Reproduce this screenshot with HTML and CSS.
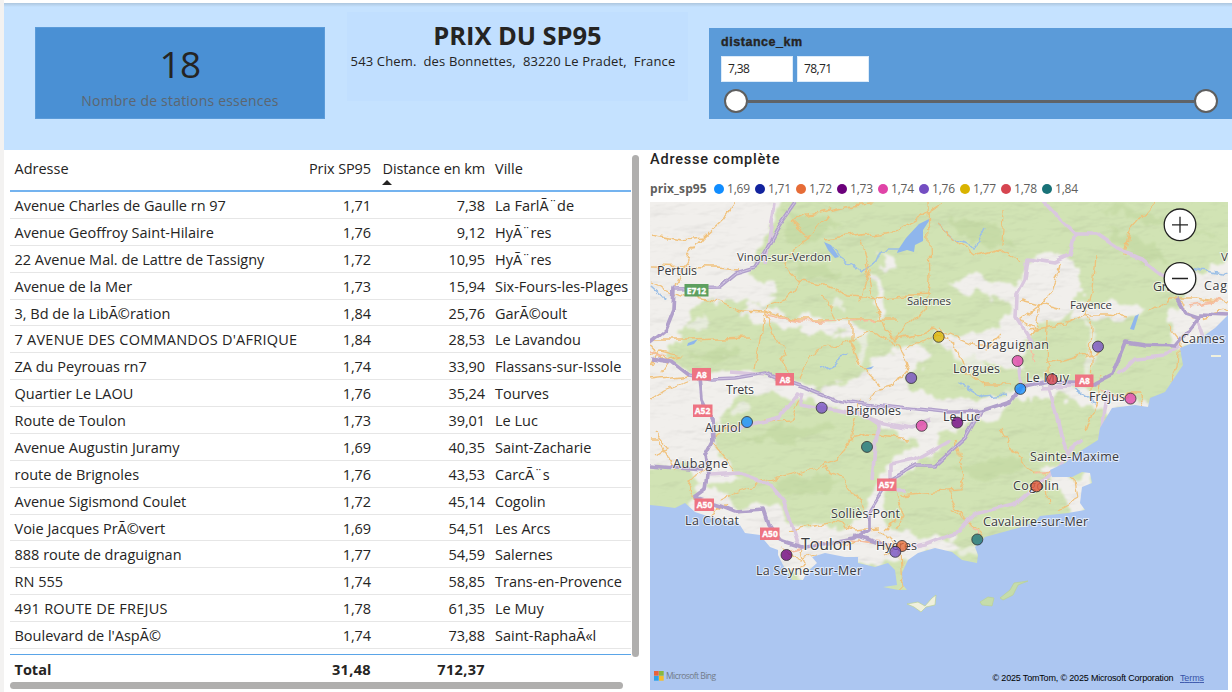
FILE: index.html
```html
<!DOCTYPE html>
<html lang="fr">
<head>
<meta charset="utf-8">
<title>Prix du SP95</title>
<link rel="stylesheet" href="styles.css">
</head>
<body>
<div class="report">
  <header class="banner">
    <section class="card">
      <div class="card-value">18</div>
      <div class="card-label">Nombre de stations essences</div>
    </section>
    <section class="title-box">
      <h1>PRIX DU SP95</h1>
      <p>543 Chem.&nbsp; des Bonnettes,&nbsp; 83220 Le Pradet,&nbsp; France</p>
    </section>
    <section class="slicer">
      <div class="slicer-name">distance_km</div>
      <div class="slicer-inputs"><span>7,38</span><span>78,71</span></div>
      <div class="slider"><i class="knob"></i><i class="track"></i><i class="knob"></i></div>
    </section>
  </header>
  <main class="content">
    <section class="table-visual">
      <div class="table-area">
        <div class="grid">
          <div class="row head"><span>Adresse</span><span class="num">Prix SP95</span><span class="num sorted">Distance en km</span><span>Ville</span></div>
          <div class="rows">
          <div class="row"><span>Avenue Charles de Gaulle rn 97</span><span class="num">1,71</span><span class="num">7,38</span><span>La FarlÃ¨de</span></div>
          <div class="row"><span>Avenue Geoffroy Saint-Hilaire</span><span class="num">1,76</span><span class="num">9,12</span><span>HyÃ¨res</span></div>
          <div class="row"><span>22 Avenue Mal. de Lattre de Tassigny</span><span class="num">1,72</span><span class="num">10,95</span><span>HyÃ¨res</span></div>
          <div class="row"><span>Avenue de la Mer</span><span class="num">1,73</span><span class="num">15,94</span><span>Six-Fours-les-Plages</span></div>
          <div class="row"><span>3, Bd de la LibÃ©ration</span><span class="num">1,84</span><span class="num">25,76</span><span>GarÃ©oult</span></div>
          <div class="row"><span class="caps">7 AVENUE DES COMMANDOS D'AFRIQUE</span><span class="num">1,84</span><span class="num">28,53</span><span>Le Lavandou</span></div>
          <div class="row"><span>ZA du Peyrouas rn7</span><span class="num">1,74</span><span class="num">33,90</span><span>Flassans-sur-Issole</span></div>
          <div class="row"><span>Quartier Le LAOU</span><span class="num">1,76</span><span class="num">35,24</span><span>Tourves</span></div>
          <div class="row"><span>Route de Toulon</span><span class="num">1,73</span><span class="num">39,01</span><span>Le Luc</span></div>
          <div class="row"><span>Avenue Augustin Juramy</span><span class="num">1,69</span><span class="num">40,35</span><span>Saint-Zacharie</span></div>
          <div class="row"><span>route de Brignoles</span><span class="num">1,76</span><span class="num">43,53</span><span>CarcÃ¨s</span></div>
          <div class="row"><span>Avenue Sigismond Coulet</span><span class="num">1,72</span><span class="num">45,14</span><span>Cogolin</span></div>
          <div class="row"><span>Voie Jacques PrÃ©vert</span><span class="num">1,69</span><span class="num">54,51</span><span>Les Arcs</span></div>
          <div class="row"><span>888 route de draguignan</span><span class="num">1,77</span><span class="num">54,59</span><span>Salernes</span></div>
          <div class="row"><span>RN 555</span><span class="num">1,74</span><span class="num">58,85</span><span>Trans-en-Provence</span></div>
          <div class="row"><span class="caps">491 ROUTE DE FREJUS</span><span class="num">1,78</span><span class="num">61,35</span><span>Le Muy</span></div>
          <div class="row"><span>Boulevard de l'AspÃ©</span><span class="num">1,74</span><span class="num">73,88</span><span>Saint-RaphaÃ«l</span></div>
          </div>
          <div class="row total"><span>Total</span><span class="num">31,48</span><span class="num">712,37</span><span></span></div>
        </div>
        <div class="vbar"></div>
      </div>
      <div class="hbar"></div>
    </section>
    <section class="map-visual">
      <h2>Adresse complète</h2>
      <div class="legend">
        <b>prix_sp95</b>
        <span class="key c169">1,69</span><span class="key c171">1,71</span><span class="key c172">1,72</span><span class="key c173">1,73</span><span class="key c174">1,74</span><span class="key c176">1,76</span><span class="key c177">1,77</span><span class="key c178">1,78</span><span class="key c184">1,84</span>
      </div>
      <svg class="map" viewBox="650 202 578 488" width="578" height="488">
        <defs>
          <clipPath id="land"><path d="M650 202H1228V315L1215 328 1195 342 1180 348 1183 365 1175 377 1165 392 1150 398 1148 407 1135 405 1112 408 1100 428 1098 440 1082 450 1065 463 1050 470 1052 477 1072 477 1082 472 1090 473 1092 483 1082 487 1080 503 1085 510 1068 513 1040 516 1035 522 1018 528 985 537 975 547 978 555 977 563 962 560 952 552 935 548 918 553 908 560 902 573 903 585 907 590 898 590 883 587 897 585 895 570 888 563 875 567 858 563 858 557 845 557 825 553 812 557 817 563 807 572 803 580 792 580 783 565 778 555 778 550 770 547 760 535 745 533 738 522 710 517 695 512 685 503 675 508 660 506 650 505Z"/></clipPath>
          <filter id="soft" x="-10%" y="-10%" width="120%" height="120%"><feTurbulence type="fractalNoise" baseFrequency=".06" numOctaves="3" seed="4" result="n"/><feDisplacementMap in="SourceGraphic" in2="n" scale="22" xChannelSelector="R" yChannelSelector="G"/><feGaussianBlur stdDeviation="1"/></filter>
          <filter id="wob" x="-5%" y="-5%" width="110%" height="110%"><feTurbulence type="fractalNoise" baseFrequency=".07" numOctaves="3" seed="8" result="n"/><feDisplacementMap in="SourceGraphic" in2="n" scale="11" xChannelSelector="R" yChannelSelector="G"/></filter>
          <filter id="sway" x="-5%" y="-5%" width="110%" height="110%"><feTurbulence type="fractalNoise" baseFrequency=".04" numOctaves="2" seed="3" result="n"/><feDisplacementMap in="SourceGraphic" in2="n" scale="8" xChannelSelector="R" yChannelSelector="G"/></filter>
          <filter id="relief" x="0" y="0" width="100%" height="100%"><feTurbulence type="fractalNoise" baseFrequency=".022 .05" numOctaves="4" seed="11"/><feDiffuseLighting surfaceScale="4" lighting-color="#fff" diffuseConstant="1.15"><feDistantLight azimuth="235" elevation="58"/></feDiffuseLighting></filter>
        </defs>
        <rect x="650" y="202" width="578" height="488" fill="#acc6f1"/>
        <g clip-path="url(#land)">
          <rect x="650" y="202" width="578" height="400" fill="#d1e3b4"/>
          <g filter="url(#soft)" fill="#f1efec">
            <path d="M630 190H785L770 235 752 268 770 290 735 300 705 302 690 320 672 345 665 360 630 365Z"/>
            <path d="M630 352L665 360 690 372 745 372 790 378 820 388 808 400 770 392 735 398 715 425 718 455 740 480 700 485 690 465 630 468Z"/>
            <path d="M690 485L715 488 740 508 775 505 790 520 830 528 862 520 872 490 892 462 915 445 920 462 888 490 882 525 915 535 965 540 960 550 900 560 850 565 800 580 740 540 690 525Z"/>
            <path d="M945 285L975 275 1020 285 1022 262 1062 252 1080 270 1080 300 1060 320 1020 340 1022 372 990 362 960 358 930 335 965 335 1000 328 1010 302 965 292Z"/>
            <path d="M1075 305L1130 300 1150 308 1120 322 1070 322Z"/>
            <path d="M1180 300L1200 270 1240 255V330L1195 342 1180 348 1165 322Z"/>
            <path d="M870 375L880 352 925 345 930 358 910 370 908 392 945 398 1000 398 1040 378 1070 380 1100 392 1130 395 1150 400 1145 412 1110 412 1060 398 1010 398 1000 420 940 432 905 438 870 420 845 410 805 402 830 385Z"/>
            <path d="M750 285q25-8 30 5l-15 15-18-5zM745 300l40 14 60 8 30 12-30 2-60-8-45-14zM870 270l10 3 6 48-7 5zM880 258l12-2 6 15-10 4zM918 430l20-4-5 32-20 3zM1040 470l22-6 10 15 18-8 4 12-10 26-14 4-6-20-18-12z"/>
            <path d="M858 330l12 2-8 32-7-6zM945 338l24 10 16 20-14 4-20-18zM1082 312l18 38-8 34-8-3 3-34zM690 320l12-4 6 10-12 8zM730 410l15-6 5 6-15 8zM835 300l12 4-5 8-10-3zM960 545l14 2 2 14-10-4z" opacity=".7"/>
          </g>
          <rect x="650" y="202" width="578" height="390" filter="url(#relief)" style="mix-blend-mode:multiply" opacity=".22"/>
          <g filter="url(#soft)" fill="#b6cf91" opacity=".35">
            <path d="M785 210l55 12-30 24-22-5zM690 355l35-10 15 8-25 12zM800 262l40 8-10 12-35-6zM740 440l70-20 25 8-40 14zM950 215l50 14 15 20-45-8zM1100 225l40 12 30 28-30-6zM950 470l60-14 20 12-50 12zM770 480l60-8 15 12-55 10zM1090 205l60 8 70 25-60-8z"/>
          </g>
          <g fill="#8fb6ec">
            <path d="M898 250l8-12 13-14 12-6-8 12 0 11-8 4-1 7-7-2-10 3z"/>
            <path d="M824 242l7 3 8 12-4 1-7-8zM688 343l10-4-4 5-7 2zM864 369l10-3-3 3zM1130 329l5-13 4-2-5 16z"/>
          </g>
          <g fill="none" stroke="#9dc0e6" stroke-width="1.6" filter="url(#wob)">
            <path d="M830 248L842 258 852 265 862 272 875 262 880 250 900 250M820 370L832 366 840 356 848 352M650 286L665 300M935 222L955 240 975 248 985 228M960 382L985 397 1005 395M1075 388L1095 402M1190 268L1228 275"/>
          </g>
          <g fill="none" stroke="#f1c078" stroke-width="1.3" opacity=".95" filter="url(#wob)">
            <path d="M650 234L680 240 703 238 723 219 735 202M703 238L688 256 674 286M650 266L715 267 740 269M650 282L680 294 712 300 743 311 763 312 795 320 840 320 895 320"/>
            <path d="M790 220L810 239 780 260 800 282 785 300 770 305 763 312 760 340 755 370M763 312L782 350 790 378M800 282L825 285 850 296 875 298 930 295M825 297L838 322M928 202L930 280 925 310 895 340 885 330 875 300 865 262M790 220L850 205 880 202M825 240L900 230 945 202M808 239L828 215"/>
            <path d="M650 340L690 340 750 338M650 345L662 360 680 355 660 350 650 356M650 380L690 376M650 400L665 390 690 380M675 470L660 440 650 440M852 322L852 340 815 350 800 378M850 340L870 332 900 345 908 370 895 385 875 390 870 400M850 340L860 365 880 385"/>
            <path d="M935 222L960 245 975 255 1000 248 1020 262M1005 210L1003 245M1060 265L1050 295 1040 305 1035 330 1030 340M1020 300L1060 310M1095 255L1092 290 1085 315 1092 330 1090 390M1125 255L1130 230 1155 202M935 330L955 345 965 370 985 385 1010 385M940 330L975 345 1000 345M1028 330L1065 325 1085 315 1110 315 1128 318M1045 365L1100 352M1048 320L1047 375M1100 375L1097 400 1085 430M1150 310L1170 298 1195 298 1228 302"/>
            <path d="M695 500L685 480 705 470M720 500L740 490 760 483 810 470 835 460 850 440 860 400M725 505L700 525 715 525M735 470L710 440 730 425 790 420 800 400M822 468L845 478 860 500 865 510M850 440L870 435 910 440M790 530L830 522 855 530 880 528M880 530L900 550 902 590M895 490L905 515 895 530M900 495L960 490 965 475 955 440M950 490L957 510 970 520M800 550L805 565 790 570M1000 430L1015 455 1035 473M1035 473L1060 475 1075 480 1078 500 1060 510M1045 475L1048 505M1120 395L1140 395 1145 405M1168 325L1180 340 1178 365 1170 380M1180 300L1190 320 1228 310"/>
            <path d="M650 366L658 352 668 362 660 372M655 430L668 446 655 455M905 350L925 340 940 335M860 300L870 270 862 240M895 340L935 330M1040 305L1020 320 1038 330M985 350L1000 335M985 537L968 520 952 510M840 545L860 540 895 548 885 555M885 530L895 520M780 550L800 560 815 555"/>
          </g>
          <g fill="none" stroke="#f6bda0" stroke-width="1.4" filter="url(#wob)">
            <path d="M765 315L800 322 840 320M853 322L875 320M1028 335L1035 360M650 352L665 355M1190 305L1220 300M1035 474L1050 472M1100 390L1130 398M790 550L815 545 850 540 895 545M980 535L970 525"/>
          </g>
          <g fill="none" stroke="#dac8df" stroke-width="3.6" stroke-linejoin="round" filter="url(#sway)">
            <path d="M1043 202L1058 218 1075 235 1098 235 1120 250 1140 258 1165 278M1075 235L1070 255 1055 262 1028 258 1025 280 1017 295 1016 318 1030 340 1033 350M1017 360L1020 388M1048 382L1056 415 1063 445 1068 462M730 372L765 375M800 393L780 418 730 430M803 393L800 405 860 415 880 422 910 428 930 420M865 415L880 425 875 445 872 480M710 475L740 473 770 485 783 500 790 520 798 545M907 490L890 490 890 465 915 460 950 440M900 550L925 545 950 535 960 532 975 515 1015 505 1035 488 1050 475 1070 450 1082 440M1108 390L1105 410 1100 440M1118 375L1135 358 1165 355 1180 345M1195 315L1205 345M775 202L765 265M1040 388L1090 385"/>
          </g>
          <g fill="none" stroke="#b1a0cb" stroke-width="3.7" stroke-linejoin="round" filter="url(#sway)">
            <path d="M796 202L780 225 755 268 735 274 718 288 674 289 673 310 665 330 650 342"/>
            <path d="M650 358L672 361 690 375 712 379 735 378 765 373 785 381 808 389 835 400 880 406 945 413 957 413 980 412 1010 402 1020 388 1048 382 1095 384 1112 375 1125 342 1145 345 1175 346 1190 328 1200 314 1228 315"/>
            <path d="M700 377L702 400 712 420 713 440 705 455 708 475 706 490 695 498 720 506 735 512 765 510 770 525 780 540 805 548M650 466L703 470M980 412L965 438 935 465 918 465 890 480 868 515 868 530 855 538 800 548M855 535L885 545M1177 298L1185 312 1200 317"/>
          </g>
          <path fill="none" stroke="#d8cde8" stroke-width=".8" filter="url(#sway)" d="M796 202L780 225 755 268 735 274 718 288 674 289M690 375L712 379 735 378 765 373 785 381 808 389 835 400 880 406 945 413M980 412L965 438 935 465 918 465 890 480 868 515"/>
        </g>
        <g fill="#f0f0dd" stroke="#bad195" stroke-width=".7"><path d="M907 604L918 602 925 606 932 598 936 595 935 605 926 607 921 612 914 607Z"/><path fill="#c5dcab" d="M980 602L988 597 994 598 992 606 982 605ZM1000 598L1010 590 1014 583 1028 581 1018 585 1013 595 1003 600Z"/><path stroke="none" d="M1211 355h10v2h-10z"/></g>

        <g fill="#ee7482">
          <rect x="684.500" y="284" width="24" height="12.500" fill="#5d9f5f"/><rect x="692" y="368" width="19" height="12.500"/><rect x="775.500" y="373" width="18.500" height="12.500"/><rect x="693" y="404.500" width="19.500" height="12.500"/><rect x="1075" y="374.500" width="18.500" height="12.500"/><rect x="877" y="478.500" width="19.500" height="12.500"/><rect x="694.500" y="498.500" width="19.500" height="12.500"/><rect x="760" y="527.500" width="19.500" height="12.500"/>
        </g>
        <g class="shield-text"><text x="696.500" y="293.500">E712</text><text x="701.500" y="377.500">A8</text><text x="785" y="382.500">A8</text><text x="702.500" y="414">A52</text><text x="1084.500" y="384">A8</text><text x="886.500" y="488">A57</text><text x="704.500" y="508">A50</text><text x="770" y="537">A50</text></g>
        <g class="place">
          <text x="657" y="274.500" textLength="40">Pertuis</text><text x="737" y="261" textLength="94" class="s">Vinon-sur-Verdon</text><text x="907" y="305" textLength="44" class="s">Salernes</text><text x="1070" y="309" textLength="42" class="s">Fayence</text>
          <text x="977" y="349" textLength="72">Draguignan</text><text x="953" y="373" textLength="47">Lorgues</text><text x="1026" y="382" textLength="43">Le Muy</text><text x="1089" y="401" textLength="36">Fréjus</text><text x="1181" y="343" textLength="44">Cannes</text><text x="1153" y="291" textLength="26">Gras</text><text x="1204" y="290" textLength="23">Cag</text><text x="1221" y="261" class="s">V</text>
          <text x="726" y="394" textLength="28">Trets</text><text x="846" y="415" textLength="55">Brignoles</text><text x="705" y="432" textLength="36">Auriol</text><text x="943" y="421" textLength="37">Le Luc</text><text x="673" y="468" textLength="55">Aubagne</text><text x="1030" y="461" textLength="89">Sainte-Maxime</text><text x="1013" y="490" textLength="46">Cogolin</text><text x="983" y="526" textLength="105">Cavalaire-sur-Mer</text><text x="831" y="518" textLength="69">Solliès-Pont</text><text x="685" y="525" textLength="54">La Ciotat</text><text class="l" x="801" y="550" textLength="51">Toulon</text><text x="876" y="550" textLength="41">Hyères</text><text x="756" y="575" textLength="106">La Seyne-sur-Mer</text>
        </g>
        <g class="pins">
          <circle class="c177" cx="938.700" cy="336.800" r="5.500"/><circle class="c176" cx="1098" cy="346.600" r="5.500"/><circle class="c174" cx="1017.600" cy="361" r="5.500"/><circle class="c176" cx="911.200" cy="378" r="5.500"/><circle class="c178" cx="1052" cy="379.300" r="5.500"/><circle class="c169" cx="1020.300" cy="388.900" r="5.500"/><circle class="c174" cx="1130.500" cy="398.600" r="5.500"/><circle class="c176" cx="821.700" cy="407.800" r="5.500"/><circle class="c169" cx="747" cy="422" r="5.500"/><circle class="c173" cx="957.300" cy="422.600" r="5.500"/><circle class="c174" cx="921.700" cy="425.800" r="5.500"/><circle class="c184" cx="867" cy="446.900" r="5.500"/><circle class="c172" cx="1036.500" cy="486.300" r="5.500"/><circle class="c178" cx="1036.500" cy="486.300" r="5.500" opacity=".4"/><circle class="c184" cx="977.300" cy="539.500" r="5.500"/><circle class="c172" cx="902" cy="546" r="5.500"/><circle class="c176" cx="895.300" cy="551.800" r="5.500"/><circle class="c173" cx="786.500" cy="555" r="5.500"/>
        </g>
        <g fill="#fff" stroke="#222" stroke-width="1.300"><circle cx="1180" cy="224.800" r="15.800"/><circle cx="1180" cy="278.500" r="15.800"/><path d="M1172 224.800h16M1180 216.800v16M1172 278.500h16"/></g>
        <g><rect x="654" y="671" width="4.700" height="4.700" fill="#e8643c"/><rect x="659" y="671" width="4.700" height="4.700" fill="#8ab83e"/><rect x="654" y="676" width="4.700" height="4.700" fill="#2fa3e8"/><rect x="659" y="676" width="4.700" height="4.700" fill="#f6bd2a"/></g>
        <text class="bing" x="666" y="679" textLength="50">Microsoft Bing</text>
        <text class="copy" x="992.500" y="681" textLength="181">© 2025 TomTom, © 2025 Microsoft Corporation</text>
        <text class="copy terms" x="1180" y="681" textLength="24">Terms</text>
      </svg>
    </section>
  </main>
</div>
</body>
</html>
```

FILE: styles.css
```css
* { box-sizing: border-box; }
body { margin: 0; width: 1232px; height: 692px; overflow: hidden; background: #f3f2f1; font-family: "Open Sans", "Noto Sans", sans-serif; color: #252423; }
.report { margin-left: 4px; height: 692px; background: #fff; display: flex; flex-direction: column; }
.banner { flex: none; height: 150px; display: flex; background: linear-gradient(#adc6de 0, #c5e2ff 4px) 0 3px no-repeat #fff; }
.card { margin: 27px 0 0 31px; width: 290px; height: 92px; background: #4a90d4; border: 1px solid #5b9bd9; text-align: center; }
.card-value { margin-top: 8px; font-size: 37px; line-height: 56px; letter-spacing: -.6px; }
.card-label { font-size: 14px; line-height: 18px; color: #5c6670; letter-spacing: .2px; }
.title-box { margin: 12px 0 0 22px; width: 341px; height: 89px; background: #c1dfff; text-align: center; }
.title-box h1 { margin: 3px 0 0; font-size: 25.500px; line-height: 40px; letter-spacing: -.05px; }
.title-box p { margin: -4px 0 0; padding-right: 9px; font-size: 13px; line-height: 20px; letter-spacing: .14px; white-space: nowrap; }
.slicer { margin: 28px 0 0 21px; flex: 1; height: 91px; background: #5b9bd9; padding: 7px 14px 0 12px; }
.slicer-name { font: bold 12.500px/15px "Liberation Sans", Arial, sans-serif; letter-spacing: .55px; -webkit-text-stroke: .35px #252423; }
.slicer-inputs { display: flex; gap: 4px; margin-top: 6px; }
.slicer-inputs span { width: 72px; height: 26px; padding-left: 6px; background: #fff; border: 1px solid #dcebf9; font-size: 12px; line-height: 24px; letter-spacing: -.6px; }
.slider { display: flex; align-items: center; margin: 7px 0 0 3px; }
.knob { width: 24px; height: 24px; border: 2px solid #5f5f5f; border-radius: 50%; background: #fff; }
.track { flex: 1; height: 3px; background: #5f6367; }
.content { flex: 1; display: flex; min-height: 0; }
.table-visual { width: 646px; flex: none; padding: 5px 0 0 6px; }
.table-area { display: flex; height: 503px; }
.grid { width: 621px; font-size: 14.500px; }
.row { display: grid; grid-template-columns: 272px 89px 114px 146px; height: 26.880px; line-height: 28px; border-bottom: 1px solid #e6e6e6; white-space: nowrap; }
.row span { padding-left: 4.500px; }
.row span:last-child { padding-left: 10px; }
.row .num { text-align: right; padding: 0 0 0 5px; letter-spacing: -.1px; }
.row .caps { letter-spacing: .25px; }
.head { height: 37px; line-height: 28px; border-bottom: 2px solid #74b3ef; }
.head .sorted { position: relative; }
.sorted::after { content: ""; position: absolute; left: 11px; top: 25px; border: 5px solid transparent; border-top: 0; border-bottom-color: #252423; }
.rows { height: 463px; overflow: hidden; border-bottom: 1px solid #5aa5e8; }
.total { border: 0; font-weight: 700; line-height: 29px; height: 28px; }
.row.total .num { letter-spacing: .35px; }
.vbar { width: 7px; height: 502px; margin-left: 1px; border-radius: 4px; background: #b0afae; }
.hbar { width: 613px; height: 7px; margin-top: 24px; border-radius: 4px; background: #b0afae; }
.map-visual { width: 582px; flex: none; }
.map-visual h2 { margin: 1px 0 0; font: 500 14.500px/18px Roboto, sans-serif; letter-spacing: .8px; }
.legend { display: flex; align-items: center; height: 33px; padding-top: 6px; font-size: 12px; color: #605e5c; }
.legend b { width: 64px; letter-spacing: .1px; }
.key { display: flex; align-items: center; gap: 3px; width: 41px; letter-spacing: -.2px; }
.key::before { content: ""; width: 10px; height: 10px; border-radius: 50%; background: var(--c); flex: none; }
.c169 { --c: #118dff; } .c171 { --c: #12239e; } .c172 { --c: #e66c37; } .c173 { --c: #6b007b; } .c174 { --c: #e044a7; } .c176 { --c: #744ec2; } .c177 { --c: #d9b300; } .c178 { --c: #d64550; } .c184 { --c: #197278; }
.map { display: block; }
.place { font-size: 12.500px; fill: #3b3b3f; paint-order: stroke; stroke: #fff; stroke-opacity: .65; stroke-width: 2px; }
.place .s { font-size: 11.500px; }
.place .l { font-size: 16px; }
.shield-text { font: bold 8.500px "Open Sans", sans-serif; fill: #fff; stroke: #fff; stroke-width: .3px; text-anchor: middle; }
.pins circle { fill: var(--c); fill-opacity: .78; stroke: #333; stroke-opacity: .8; stroke-width: 1px; }
.bing { font-size: 8.500px; fill: #727b88; }
.copy { font: 9px "Liberation Sans", Arial, sans-serif; fill: #000; }
.terms { fill: #3652a8; text-decoration: underline; }
```
